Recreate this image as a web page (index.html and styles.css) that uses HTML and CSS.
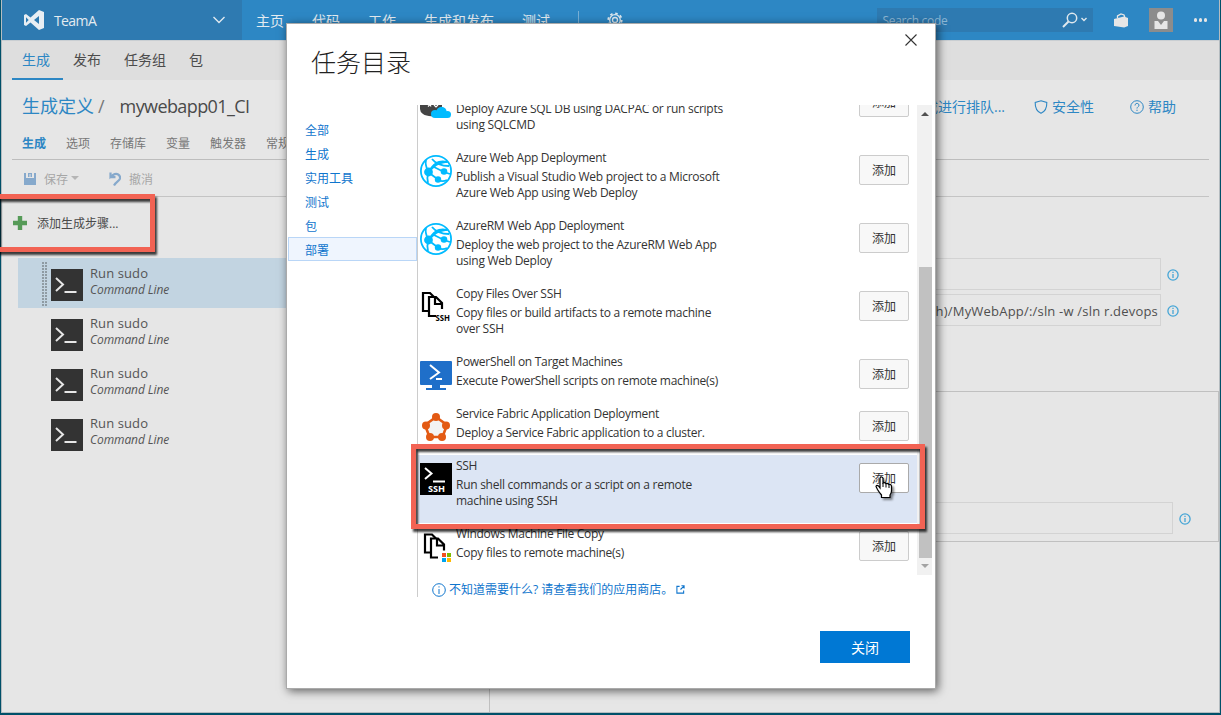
FILE: index.html
```html
<!DOCTYPE html>
<html lang="zh-CN">
<head>
<meta charset="utf-8">
<title>任务目录</title>
<link rel="stylesheet" href="styles.css">
</head>
<body>
<svg width="0" height="0" class="defs">
  <symbol id="cmd" viewBox="0 0 32 32"><rect width="32" height="32" fill="#333"/><path d="M5 9l7 6.500-7 6.500" fill="none" stroke="#e6e6e6" stroke-width="2"/><path d="M13.500 23h12" stroke="#e6e6e6" stroke-width="2"/></symbol>
  <symbol id="web" viewBox="0 0 32 32"><circle cx="16" cy="16" r="15.100" fill="#fff" stroke="#0bf" stroke-width="1.800"/><g fill="none" stroke="#0bf" stroke-width="1.800"><path d="M6 5C5 9 6 12 8 16M12 4C16 9 21 11 29 11M8 17L18 24.500M14 12L24 17M24 17L30 19M8 19C7 22 7 24 8 28M18 25C22 27 25 26 27 25"/></g><g fill="#0bf"><circle cx="8.500" cy="17" r="4.400"/><circle cx="24" cy="16.500" r="3.300"/><circle cx="18" cy="24.500" r="3.200"/><path d="M9 15C13 7 20 4 27 6L28 8C21 8 16 10 11 16z"/></g></symbol>
  <symbol id="copy" viewBox="0 0 32 32"><g fill="#fff" stroke="#000" stroke-width="2.200"><path d="M9 20H3V2h7l4 4"/><path d="M16 25H9V6h7l6 6v6M15 6v7h7"/></g></symbol>
  <symbol id="info" viewBox="0 0 14 14"><circle cx="7" cy="7" r="6.300" fill="none" stroke="currentColor"/><path d="M7 6v5M7 3.300v1.200" stroke="currentColor"/></symbol>
  <symbol id="info-b" viewBox="0 0 12 12"><circle cx="6" cy="6" r="5.100" fill="none" stroke="currentColor" stroke-width="1.300"/><path d="M6 5v4M6 2.800v1.200" stroke="currentColor" stroke-width="1.300"/></symbol>
</svg>
<div class="app">
  <header class="topbar">
    <div class="team">
      <svg class="vs" viewBox="0 0 22 20"><path fill="#e8eef3" fill-rule="evenodd" d="M16 0l5 2v16l-5 2-8.500-7.500L3 16l-2-1V5l2-1 4.500 3.500zM16 6l-5 4 5 4zM3 7.200v5.600L5.700 10z"/></svg>
      <span class="team-name">TeamA</span>
      <svg class="chev" viewBox="0 0 12 8"><path d="M.500 1L6 6.500 11.500 1" fill="none" stroke="#e0e9f0" stroke-width="1.400"/></svg>
    </div>
    <nav class="mainnav"><span>主页</span><span>代码</span><span>工作</span><span>生成和发布</span><span>测试</span><i class="sep"></i>
      <svg class="gear" viewBox="0 0 16 16" fill="none" stroke="#dde8ef"><circle cx="8" cy="8" r="2.500" stroke-width="1.300"/><circle cx="8" cy="8" r="5.300" stroke-width="1.300"/><circle cx="8" cy="8" r="6.700" stroke-width="1.800" stroke-dasharray="2.500 2.762"/></svg>
    </nav>
    <div class="search"><span>Search code</span>
      <svg class="mag" viewBox="0 0 26 16" fill="none" stroke="#dfe8ee"><circle cx="10" cy="6" r="4.700" stroke-width="1.500"/><path d="M6.500 9.500L1 15" stroke-width="2"/><path d="M19.500 6l2.500 2.500L24.500 6" stroke-width="1.400"/></svg>
    </div>
    <svg class="bag" viewBox="0 0 14 15"><path d="M3.500 5V3l3.500-2 3 1 .8 2" fill="none" stroke="#e6e6e6" stroke-width="1.300"/><path fill="#e6e6e6" d="M0 6l10-2.500L14 5v8l-3.800 1.500L0 13z"/></svg>
    <svg class="avatar" viewBox="0 0 24 24"><rect width="24" height="24" fill="#8c8c8c"/><circle cx="12" cy="7.500" r="4" fill="#e6e6e6"/><path fill="#e6e6e6" d="M5.500 13H9l3 4 3-4h3.500v8h-13z"/></svg>
    <span class="more"><i></i><i></i><i></i></span>
  </header>
  <nav class="hub"><span class="on">生成</span><span>发布</span><span>任务组</span><span>包</span></nav>
  <section class="title"><span class="blue">生成定义</span><span class="slash">/</span><span class="name">mywebapp01_CI</span>
    <div class="links"><span>成进行排队...</span>
      <svg class="ic-shield" viewBox="0 0 14 14"><path d="M7 .8L12.800 2.500C13 8 11 11.500 7 13.300 3 11.500 1 8 1.200 2.500z" fill="none" stroke="currentColor" stroke-width="1.100"/></svg><span>安全性</span>
      <svg class="ic-help" viewBox="0 0 14 14"><circle cx="7" cy="7" r="6.300" fill="none" stroke="currentColor"/><path d="M5 5.500c0-3 4-2.500 4-.3C9 6.700 7 6.800 7 8.500M7 9.700v1.300" fill="none" stroke="currentColor"/></svg><span>帮助</span>
    </div>
  </section>
  <nav class="tabs"><span class="on">生成</span><span>选项</span><span>存储库</span><span>变量</span><span>触发器</span><span>常规</span></nav>
  <div class="tools">
    <svg class="save" viewBox="0 0 12 12"><path fill="#86a9cc" fill-rule="evenodd" d="M0 0h2v5h8V0h2v12H0zM4 0h4v4H6.500V1H5.500v3H4z"/></svg><span>保存</span><i class="tri"></i>
    <svg class="undo" viewBox="0 0 12 14"><path d="M1 5.200h5.500M1.500 .500V5L4 3c4-2.500 7.500 0 7 3.500C10.500 9 7 9.500 5 13.500" fill="none" stroke="#86a9cc" stroke-width="2.200"/></svg><span>撤消</span>
  </div>
  <main class="work">
    <aside class="steps">
      <div class="addstep"><svg viewBox="0 0 14 14"><path d="M7 0v14M0 7h14" stroke="#569b58" stroke-width="4.400"/></svg><span>添加生成步骤...</span></div>
      <div class="step sel"><i class="grip"></i><svg><use href="#cmd"/></svg><div><b>Run sudo</b><em>Command Line</em></div></div>
      <div class="step"><i></i><svg><use href="#cmd"/></svg><div><b>Run sudo</b><em>Command Line</em></div></div>
      <div class="step"><i></i><svg><use href="#cmd"/></svg><div><b>Run sudo</b><em>Command Line</em></div></div>
      <div class="step"><i></i><svg><use href="#cmd"/></svg><div><b>Run sudo</b><em>Command Line</em></div></div>
    </aside>
    <section class="form">
      <div class="field"><div class="input"></div><svg class="info"><use href="#info-b"/></svg></div>
      <div class="field"><div class="input"><span>h)/MyWebApp/:/sln -w /sln r.devops</span></div><svg class="info"><use href="#info-b"/></svg></div>
      <div class="group"><div class="field"><div class="input"></div><svg class="info"><use href="#info-b"/></svg></div></div>
    </section>
  </main>
</div>

<div class="modal">
  <div class="m-head"><h1>任务目录</h1><svg class="close" viewBox="0 0 12 12"><path d="M.500 .500l11 11M11.500 .500l-11 11" stroke="#333" stroke-width="1.100"/></svg></div>
  <div class="m-body">
    <nav class="cats"><span>全部</span><span>生成</span><span>实用工具</span><span>测试</span><span>包</span><span class="on">部署</span></nav>
    <div class="catalog">
      <div class="scroll">
        <div class="list">
          <div class="task"><svg viewBox="0 0 32 32"><path d="M0 0h22v26c-5 4-15 4-19 1Q0 25 0 22z" fill="#444"/><path d="M8 19.500l2-2 1 2M14 18l2 2 2-2" fill="none" stroke="#fff" stroke-width="1.200"/><g fill="#0bf"><circle cx="15" cy="27" r="4"/><circle cx="21.500" cy="25" r="5.200"/><circle cx="27.500" cy="27.500" r="3.500"/><path d="M15 26h12.500v5H15z"/></g></svg><div class="t"><b>&nbsp;</b><p>Deploy Azure SQL DB using DACPAC or run scripts<br>using SQLCMD</p></div><button>添加</button></div>
          <div class="task"><svg><use href="#web"/></svg><div class="t"><b>Azure Web App Deployment</b><p>Publish a Visual Studio Web project to a Microsoft<br>Azure Web App using Web Deploy</p></div><button>添加</button></div>
          <div class="task"><svg><use href="#web"/></svg><div class="t"><b>AzureRM Web App Deployment</b><p>Deploy the web project to the AzureRM Web App<br>using Web Deploy</p></div><button>添加</button></div>
          <div class="task"><svg viewBox="0 0 32 32"><use href="#copy"/><text x="15.500" y="30" class="ssh" textLength="14.500" lengthAdjust="spacingAndGlyphs" fill="#000">SSH</text></svg><div class="t"><b>Copy Files Over SSH</b><p>Copy files or build artifacts to a remote machine<br>over SSH</p></div><button>添加</button></div>
          <div class="task"><svg viewBox="0 0 32 32"><path d="M1 3h30q1 0 1 1v22q0 1-1 1H20v3h6v2H6v-2h6v-3H1q-1 0-1-1V4q0-1 1-1z" fill="#1f6fc9" transform="translate(0 -1)"/><path d="M10 6l9 7.500-9 6.500M16 20h6" fill="none" stroke="#fff" stroke-width="2"/></svg><div class="t"><b>PowerShell on Target Machines</b><p>Execute PowerShell scripts on remote machine(s)</p></div><button>添加</button></div>
          <div class="task"><svg viewBox="0 0 32 32"><g transform="translate(0 -1)"><path d="M16 7L27 15 22.500 27h-13L5 15z" fill="#f3f3f3" stroke="#e35a13" stroke-width="2.600"/><g fill="#e35a13"><circle cx="16" cy="7" r="4"/><circle cx="26" cy="15.500" r="4"/><circle cx="22" cy="27" r="4"/><circle cx="10" cy="27" r="4"/><circle cx="6" cy="15.500" r="4"/></g></g></svg><div class="t"><b>Service Fabric Application Deployment</b><p>Deploy a Service Fabric application to a cluster.</p></div><button>添加</button></div>
          <div class="task hot"><svg viewBox="0 0 32 32"><rect width="32" height="32"/><path d="M5 5l6.500 5.500L5 16M13 18.500h12" fill="none" stroke="#fff" stroke-width="2"/><text x="8" y="29" class="ssh" textLength="17" lengthAdjust="spacingAndGlyphs" fill="#fff">SSH</text></svg><div class="t"><b>SSH</b><p>Run shell commands or a script on a remote<br>machine using SSH</p></div><button>添加</button></div>
          <div class="task"><svg viewBox="0 0 32 32"><g transform="translate(2 1.500)"><use href="#copy" width="32" height="32"/></g><path d="M22 22h4v4h-4z" fill="#f25022"/><path d="M27 22h4v4h-4z" fill="#7fba00"/><path d="M22 27h4v4h-4z" fill="#00a4ef"/><path d="M27 27h4v4h-4z" fill="#ffb900"/></svg><div class="t"><b>Windows Machine File Copy</b><p>Copy files to remote machine(s)</p></div><button>添加</button></div>
        </div>
        <div class="bar"><i class="up"></i><i class="thumb"></i><i class="down"></i></div>
      </div>
      <div class="store"><svg class="si"><use href="#info"/></svg><span>不知道需要什么? 请查看我们的应用商店。</span><svg class="ext" viewBox="0 0 10 10"><path d="M4 1.500H1v7.500h7.500V6M6 .900h3V4M8.800 1.200L5 5" fill="none" stroke="currentColor" stroke-width="1.200"/></svg></div>
    </div>
  </div>
  <div class="m-foot"><button class="primary">关闭</button></div>
</div>
<div class="mark mark-a"></div>
<div class="mark mark-b"></div>
<svg class="hand" viewBox="0 0 18 23"><path d="M5 12V2.500Q5 1 6.500 1T8 2.500V7q1.500-1 3 .7 1.500-.8 2.700.8 2.800-.5 2.800 2V15q0 2-1.500 4v2.500H6.500V19Q4 16 2.500 13.500L1 10.500Q1.500 8.500 3.500 10z" fill="#fff" stroke="#000" stroke-width="1.200"/><path d="M8 7v4M11 8v3.500M14 9v3" stroke="#000"/></svg>
</body>
</html>
```
FILE: styles.css
```css
* { box-sizing: border-box; }
body { margin: 0; width: 1221px; height: 715px; overflow: hidden; position: relative; background: #005069; font-family: "Open Sans", "Noto Sans CJK SC", sans-serif; font-size: 12px; color: #333; }
svg { display: block; flex: none; }
.defs { position: absolute; }
span, b, em { white-space: nowrap; }
.app { margin-left: 1px; width: 1219px; height: 713px; background: #e6e6e6; border: solid #b5bcc0; border-width: 0 1px 1px; display: flex; flex-direction: column; }

.topbar { height: 40px; background: #2d87c4; display: flex; align-items: center; flex: none; color: #e3ebf0; font-size: 14px; }
.team { width: 240px; height: 40px; background: #2e7ab1; display: flex; align-items: center; }
.vs { width: 22px; height: 20px; margin-left: 21px; }
.team-name { margin-left: 9px; font-size: 14px; letter-spacing: -.6px; line-height: 20px; margin-top: 2px; }
.chev { width: 12px; height: 8px; margin-left: auto; margin-right: 17px; }
.mainnav { display: flex; align-items: center; gap: 28px; margin-left: 14px; }
.sep { width: 1px; height: 19px; background: #78b0d6; }
.gear { width: 16px; height: 16px; }
.search { width: 216px; height: 24px; margin-left: auto; background: #2e7ab1; display: flex; align-items: center; justify-content: space-between; padding: 0 5px 0 6px; font-size: 12px; letter-spacing: -.3px; color: #8db7d4; }
.mag { width: 26px; height: 16px; }
.bag { width: 14px; height: 15px; margin-left: 21px; }
.avatar { width: 24px; height: 24px; margin-left: 21px; }
.more { display: flex; gap: 1.500px; margin: 0 12px 0 21px; }
.more i { width: 3.500px; height: 3.500px; border-radius: 2px; background: #e6e6e6; }

.hub { height: 40px; flex: none; background: #dedede; border-top: 1px solid #c9ced2; padding-left: 10px; display: flex; font-size: 14px; color: #4c4c4c; }
.hub span { padding: 0 13px 0 10px; line-height: 38px; height: 39px; }
.hub .on { color: #2d87c4; border-bottom: 2px solid #2d87c4; }

.title { height: 46px; flex: none; display: flex; align-items: center; padding: 5px 43px 0 20px; font-size: 18px; line-height: 26px; }
.blue, .links { color: #2d87c4; }
.slash { margin-left: 4px; color: #777; }
.name { margin-left: 15px; color: #4a4a4a; letter-spacing: -.6px; }
.links { margin-left: auto; display: flex; align-items: center; font-size: 14px; padding-top: 2px; }
.ic-shield { width: 14px; height: 14px; margin: 0 4px 0 29px; }
.ic-help { width: 14px; height: 14px; margin: 0 4px 0 36px; }

.tabs { height: 34px; flex: none; margin: 0 10px; padding: 0 10px; border-bottom: 1px solid #bdbdbd; display: flex; gap: 20px; line-height: 35px; color: #777; overflow: hidden; }
.tabs .on { color: #2d87c4; font-weight: 700; }
.tools { height: 37px; flex: none; margin: 0 10px; padding-left: 12px; border-bottom: 1px solid #c4c4c4; display: flex; align-items: center; color: #a6a6a6; }
.tools span { padding-top: 1px; }
.save { width: 12px; height: 12px; margin-right: 8px; margin-top: 2px; }
.tri { border: 4px solid transparent; border-top-color: #b5b5b5; border-bottom: 0; margin-left: 3px; }
.undo { width: 12px; height: 14px; margin: 2px 8px 0 30px; }

.work { flex: 1; display: flex; }
.steps { width: 488px; border-right: 1px solid #c0c0c0; padding-left: 16px; }
.addstep { height: 51px; margin: 0 0 10px -5px; display: flex; align-items: center; gap: 10px; color: #4a4a4a; }
.addstep svg { width: 14px; height: 14px; }
.step { height: 50px; display: flex; padding-left: 23px; }
.step.sel { background: #c2d4e1; }
.step > i { width: 6px; height: 45px; margin: 3px 3px 0 1px; }
.grip { background: repeating-linear-gradient(#c2d4e1 0 1px, transparent 1px 3px), repeating-linear-gradient(90deg, #8f9ba3 0 2px, #c2d4e1 2px 3px); }
.step > svg { width: 32px; height: 32px; margin-top: 11px; }
.step div { margin-left: 7px; padding-top: 7px; }
.step b, .step em { display: block; font-weight: 400; line-height: 16px; color: #555; }
.step b { font-size: 13px; letter-spacing: .1px; }
.step em { font-size: 12px; margin-top: 1px; letter-spacing: -.08px; }
.form { flex: 1; padding-top: 61px; }
.field { display: flex; align-items: center; margin-bottom: 4px; }
.input { width: 671px; height: 32px; border: 1px solid #d3d3d3; padding-right: 2px; text-align: right; line-height: 32px; font-size: 13px; letter-spacing: .2px; color: #4f4f4f; }
.info { width: 12px; height: 12px; margin-left: 6px; margin-top: 2px; color: #45a5d6; }
.group { height: 151px; margin-top: 65px; border: 1px solid #c0c0c0; border-left: 0; padding-top: 110px; }
.group .input { width: 683px; }

.modal { position: absolute; left: 286px; top: 23px; width: 650px; height: 666px; background: #fff; border: 1px solid #aaa; box-shadow: 2px 2px 9px rgba(0,0,0,.6); display: flex; flex-direction: column; }
.m-head { height: 81px; display: flex; justify-content: space-between; padding: 0 18px 0 24px; }
h1 { margin: 19px 0 0; font-size: 25px; line-height: 36px; font-weight: 300; color: #222; font-family: "Noto Sans CJK SC Light", "Noto Sans CJK SC", sans-serif; }
.close { width: 12px; height: 12px; margin-top: 10px; }
.m-body { display: flex; height: 492px; }
.cats { width: 130px; padding: 14px 0 0 1px; display: flex; flex-direction: column; color: #0f75cd; }
.cats span { height: 24px; line-height: 24px; padding-left: 17px; }
.cats .on { background: #eff5fe; border: 1px solid #b9d6f7; line-height: 25px; padding-left: 16px; margin-top: -2px; }
.catalog { border-left: 1px solid #ccc; width: 516px; }
.scroll { height: 470px; display: flex; overflow: hidden; }
.list { width: 499px; margin-top: -26px; }
.task { display: flex; padding-left: 2px; min-height: 52px; }
.hot { background: #dce5f4; }
.task > svg { width: 32px; height: 32px; margin-top: 8px; }
.t { flex: 1; padding: 3px 0 14px 4px; }
.t b { display: block; font-weight: 400; line-height: 16px; height: 16px; letter-spacing: -.3px; }
.t p { margin: 3px 0 0; line-height: 16px; letter-spacing: -.27px; white-space: nowrap; }
.ssh { font: 700 8px "Open Sans", sans-serif; }
.task button { width: 50px; height: 30px; margin: 8px 8px 0 0; border: 1px solid #ccc; border-radius: 2px; background: #f8f8f8; font: 12px/28px "Open Sans", "Noto Sans CJK SC", sans-serif; color: #333; padding: 1px 0 0; }
.hot button { background: #fff; border-color: #aaa; }
.bar { width: 15px; background: #f1f1f1; padding: 7px 0 7px 2px; display: flex; flex-direction: column; }
.up { border: 4px solid transparent; border-bottom: 4px solid #505050; border-top: 0; width: 8px; margin-left: 2px; }
.thumb { width: 13px; height: 291px; background: #c1c1c1; margin-top: 151px; }
.down { border: 4px solid transparent; border-top: 4px solid #a3a3a3; border-bottom: 0; width: 8px; margin: 6px 0 0 2px; }
.store { height: 22px; display: flex; align-items: center; padding: 7px 0 0 14px; color: #0f75cd; line-height: 16px; }
.si { width: 14px; height: 14px; margin-right: 3px; }
.ext { width: 9px; height: 9px; margin: -1px 0 0 3px; }
.m-foot { padding: 34px 25px 0; display: flex; justify-content: flex-end; }
.primary { width: 90px; height: 32px; border: 0; background: #0078d4; color: #fff; font: 14px "Noto Sans CJK SC", sans-serif; padding: 0; }

.mark { position: absolute; border: 5px solid #f26354; filter: drop-shadow(2px 3px 1px rgba(0,0,0,.75)); }
.mark-a { left: -6px; top: 194px; width: 161px; height: 58px; }
.mark-b { left: 411px; top: 444px; width: 514px; height: 85px; }
.hand { position: absolute; left: 875px; top: 476px; width: 18px; height: 23px; filter: drop-shadow(2px 2px 1px rgba(0,0,0,.45)); }
```
